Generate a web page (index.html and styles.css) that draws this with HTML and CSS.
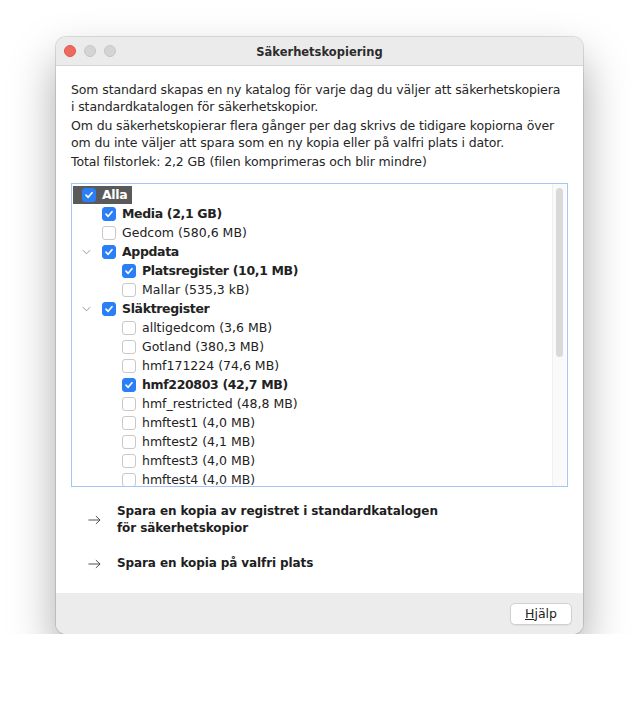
FILE: index.html
```html
<!DOCTYPE html>
<html lang="sv">
<head>
  <meta charset="UTF-8" />
  <meta name="viewport" content="width=device-width, initial-scale=1.0" />
  <title>Säkerhetskopiering</title>
  <link rel="stylesheet" href="styles.css">
</head>
<body>
  <div class="window">
    <div class="titlebar">
      <div class="lights">
        <span class="light red"></span>
        <span class="light"></span>
        <span class="light"></span>
      </div>
      <h1>Säkerhetskopiering</h1>
    </div>

    <div class="content">
      <p>Som standard skapas en ny katalog för varje dag du väljer att säkerhetskopiera<br>i standardkatalogen för säkerhetskopior.</p>
      <p>Om du säkerhetskopierar flera gånger per dag skrivs de tidigare kopiorna över<br>om du inte väljer att spara som en ny kopia eller på valfri plats i dator.</p>
      <p>Total filstorlek: 2,2 GB (filen komprimeras och blir mindre)</p>

      <div class="tree">
        <div class="list">
          <div class="row l0">
            <span class="selected">
              <span class="cb on"><svg viewBox="0 0 14 14"><polyline points="3.5,7.2 6,9.7 10.5,4.3" /></svg></span>
              <b>Alla</b>
            </span>
          </div>
          <div class="row l1"><span class="cb on"><svg viewBox="0 0 14 14"><polyline points="3.5,7.2 6,9.7 10.5,4.3" /></svg></span><b>Media (2,1 GB)</b></div>
          <div class="row l1"><span class="cb"></span>Gedcom (580,6 MB)</div>
          <div class="row l1"><span class="twisty"><svg viewBox="0 0 10 6"><polyline points="1,1 5,5 9,1" /></svg></span><span class="cb on"><svg viewBox="0 0 14 14"><polyline points="3.5,7.2 6,9.7 10.5,4.3" /></svg></span><b>Appdata</b></div>
          <div class="row l2"><span class="cb on"><svg viewBox="0 0 14 14"><polyline points="3.5,7.2 6,9.7 10.5,4.3" /></svg></span><b>Platsregister (10,1 MB)</b></div>
          <div class="row l2"><span class="cb"></span>Mallar (535,3 kB)</div>
          <div class="row l1"><span class="twisty"><svg viewBox="0 0 10 6"><polyline points="1,1 5,5 9,1" /></svg></span><span class="cb on"><svg viewBox="0 0 14 14"><polyline points="3.5,7.2 6,9.7 10.5,4.3" /></svg></span><b>Släktregister</b></div>
          <div class="row l2"><span class="cb"></span>alltigedcom (3,6 MB)</div>
          <div class="row l2"><span class="cb"></span>Gotland (380,3 MB)</div>
          <div class="row l2"><span class="cb"></span>hmf171224 (74,6 MB)</div>
          <div class="row l2"><span class="cb on"><svg viewBox="0 0 14 14"><polyline points="3.5,7.2 6,9.7 10.5,4.3" /></svg></span><b>hmf220803 (42,7 MB)</b></div>
          <div class="row l2"><span class="cb"></span>hmf_restricted (48,8 MB)</div>
          <div class="row l2"><span class="cb"></span>hmftest1 (4,0 MB)</div>
          <div class="row l2"><span class="cb"></span>hmftest2 (4,1 MB)</div>
          <div class="row l2"><span class="cb"></span>hmftest3 (4,0 MB)</div>
          <div class="row l2"><span class="cb"></span>hmftest4 (4,0 MB)</div>
        </div>
        <div class="scrolltrack"><div class="thumb"></div></div>
      </div>

      <div class="actions">
        <a class="action" href="#">
          <svg class="arrow" viewBox="0 0 14 10"><path d="M0.5 5H13M8.5 0.8L13 5L8.5 9.2" /></svg>
          <span>Spara en kopia av registret i standardkatalogen<br>för säkerhetskopior</span>
        </a>
        <a class="action" href="#">
          <svg class="arrow" viewBox="0 0 14 10"><path d="M0.5 5H13M8.5 0.8L13 5L8.5 9.2" /></svg>
          <span>Spara en kopia på valfri plats</span>
        </a>
      </div>
    </div>

    <div class="footer">
      <button><u>H</u>jälp</button>
    </div>
  </div>
</body>
</html>
```

FILE: styles.css
```css
* {
  box-sizing: border-box;
  margin: 0;
  padding: 0;
}

body {
  background: #fff;
  font-family: 'DejaVu Sans', 'Liberation Sans', sans-serif;
  font-size: 12.5px;
  color: #262626;
}

.window {
  width: 527px;
  margin: 37px 0 0 56px;
  background: #fff;
  border-radius: 10px;
  overflow: hidden;
  box-shadow: 0 22px 45px rgba(0, 0, 0, 0.34), 0 0 0 1px rgba(0, 0, 0, 0.12);
}

.titlebar {
  height: 29px;
  background: #ebebeb;
  border-bottom: 1px solid #d6d6d6;
  display: flex;
  align-items: center;
  justify-content: center;
  position: relative;
}

.lights {
  position: absolute;
  left: 8px;
  top: 8px;
  display: flex;
  gap: 8px;
}

.light {
  width: 12px;
  height: 12px;
  border-radius: 50%;
  background: #d4d4d4;
  border: 1px solid #c6c6c6;
}

.light.red {
  background: #ee6a5f;
  border-color: #e0574d;
}

.titlebar h1 {
  font-size: 11.5px;
  font-weight: bold;
  color: #2c2c2c;
  padding-top: 1px;
}

.content {
  padding: 15px 15px 21px;
}

.content p {
  line-height: 17px;
  margin-bottom: 2px;
  letter-spacing: -0.12px;
}

.tree {
  margin-top: 13px;
  height: 304px;
  border: 1px solid #a5c6f2;
  display: flex;
  overflow: hidden;
  color: #222;
}

.list {
  flex: 1;
  padding-top: 1px;
}

.row {
  height: 19px;
  display: flex;
  align-items: center;
  white-space: nowrap;
}

.row b {
  letter-spacing: -0.35px;
}

.l0 { padding-left: 1px; }
.l1 { padding-left: 30px; }
.l2 { padding-left: 50px; }

.selected {
  display: flex;
  align-items: center;
  height: 18px;
  padding: 0 5px 0 9px;
  background: #5a5a5a;
  color: #fff;
}

.twisty {
  width: 25px;
  margin-left: -25px;
  display: flex;
  align-items: center;
}

.twisty svg {
  width: 9px;
  height: 6px;
  margin-left: 5px;
  fill: none;
  stroke: #8a8a8a;
  stroke-width: 1;
}

.cb {
  width: 14px;
  height: 14px;
  border-radius: 3px;
  border: 1px solid #c9c9c9;
  background: #fff;
  margin-right: 6px;
  flex-shrink: 0;
  display: flex;
}

.cb.on {
  background: #2a7ff6;
  border-color: #2a7ff6;
}

.cb svg {
  width: 12px;
  height: 12px;
  fill: none;
  stroke: #fff;
  stroke-width: 1.9;
  stroke-linecap: round;
  stroke-linejoin: round;
}

.scrolltrack {
  width: 14px;
  margin-right: 1px;
  background: #fafafa;
  border-left: 1px solid #f0f0f0;
  padding: 4px 3px 0 3px;
}

.thumb {
  height: 169px;
  border-radius: 4px;
  background: #d9d9d9;
}

.actions {
  padding: 16px 0 0 17px;
  display: flex;
  flex-direction: column;
  gap: 18px;
}

.action {
  display: flex;
  align-items: center;
  gap: 16px;
  color: #1e1e1e;
  font-size: 12px;
  font-weight: bold;
  letter-spacing: -0.1px;
  text-decoration: none;
  line-height: 17px;
}

.arrow {
  width: 13px;
  height: 10px;
  fill: none;
  stroke: #444;
  stroke-width: 1;
}

.footer {
  height: 41px;
  background: #ececec;
  display: flex;
  align-items: center;
  justify-content: flex-end;
  padding-right: 11px;
}

.footer button {
  width: 62px;
  height: 22px;
  background: #fff;
  border: 1px solid #d0d0d0;
  border-radius: 5px;
  font-family: inherit;
  font-size: 12.5px;
  color: #222;
  box-shadow: 0 1px 1px rgba(0, 0, 0, 0.06);
}
```
